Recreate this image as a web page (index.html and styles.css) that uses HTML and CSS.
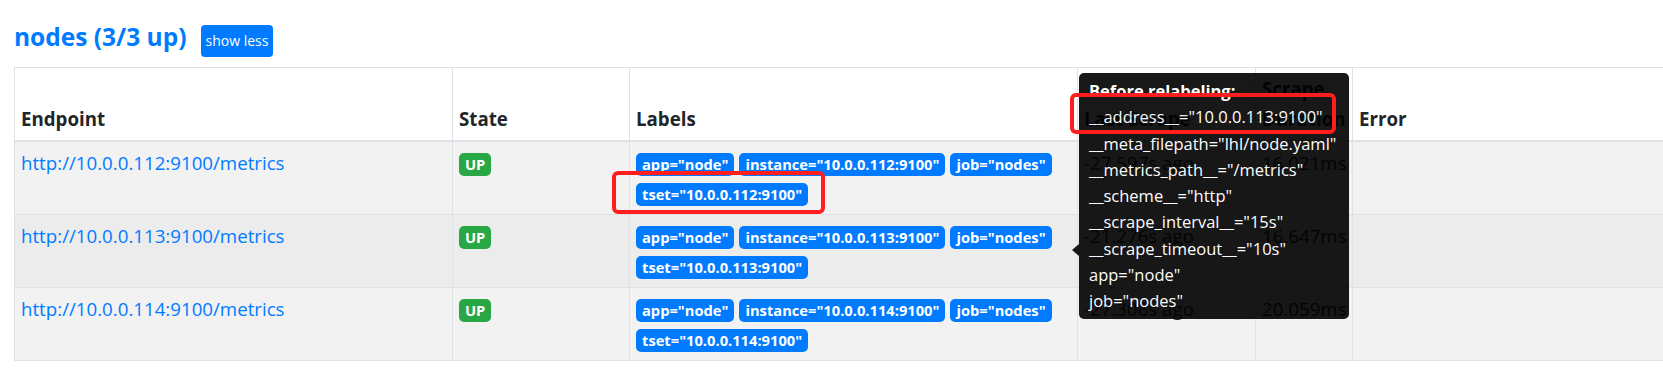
FILE: index.html
```html
<!DOCTYPE html>
<html lang="en">
<head>
  <meta charset="UTF-8">
  <meta name="viewport" content="width=device-width, initial-scale=1.0">
  <title>Targets</title>
  <link rel="stylesheet" href="styles.css">
</head>
<body>

  <div class="pool">
    <h3 class="pool-title">
      <a href="#pool-nodes" id="pool-nodes">nodes (3/3 up)</a>
      <button type="button" class="btn-xs">show less</button>
    </h3>

    <table class="targets">
      <colgroup>
        <col class="col-endpoint">
        <col class="col-state">
        <col class="col-labels">
        <col class="col-last">
        <col class="col-duration">
        <col class="col-error">
      </colgroup>
      <thead>
        <tr>
          <th>Endpoint</th>
          <th>State</th>
          <th>Labels</th>
          <th>Last Scrape</th>
          <th>Scrape Duration</th>
          <th>Error</th>
        </tr>
      </thead>
      <tbody>
        <tr class="odd">
          <td><a href="#">http://10.0.0.112:9100/metrics</a></td>
          <td><span class="badge badge-up">UP</span></td>
          <td>
            <span class="badge">app="node"</span><span class="badge">instance="10.0.0.112:9100"</span><span class="badge">job="nodes"</span><span class="badge">tset="10.0.0.112:9100"</span>
          </td>
          <td>-27.597s ago</td>
          <td>16.021ms</td>
          <td></td>
        </tr>
        <tr class="hover">
          <td><a href="#">http://10.0.0.113:9100/metrics</a></td>
          <td><span class="badge badge-up">UP</span></td>
          <td>
            <span class="badge">app="node"</span><span class="badge">instance="10.0.0.113:9100"</span><span class="badge">job="nodes"</span><span class="badge">tset="10.0.0.113:9100"</span>
          </td>
          <td>-21.276s ago</td>
          <td>16.647ms</td>
          <td></td>
        </tr>
        <tr class="odd">
          <td><a href="#">http://10.0.0.114:9100/metrics</a></td>
          <td><span class="badge badge-up">UP</span></td>
          <td>
            <span class="badge">app="node"</span><span class="badge">instance="10.0.0.114:9100"</span><span class="badge">job="nodes"</span><span class="badge">tset="10.0.0.114:9100"</span>
          </td>
          <td>-27.306s ago</td>
          <td>20.059ms</td>
          <td></td>
        </tr>
      </tbody>
    </table>
  </div>

  <!-- tooltip for the labels of the second target -->
  <div class="tooltip">
    <b>Before relabeling:</b><br>
    __address__="10.0.0.113:9100"<br>
    __meta_filepath="lhl/node.yaml"<br>
    __metrics_path__="/metrics"<br>
    __scheme__="http"<br>
    __scrape_interval__="15s"<br>
    __scrape_timeout__="10s"<br>
    app="node"<br>
    job="nodes"
  </div>

  <!-- red annotation boxes -->
  <div class="mark mark-address"></div>
  <div class="mark mark-tset"></div>

</body>
</html>
```

FILE: styles.css
```css
html, body {
  margin: 0;
  overflow: hidden;
}
body {
  font-family: "Open Sans", sans-serif;
  font-size: 18.7px;
  line-height: 30px;
  color: #212529;
  background-color: #fff;
}
a {
  color: #007bff;
  text-decoration: none;
}
.pool {
  padding: 22px 0 0 14px;
}
.pool-title {
  display: flex;
  align-items: baseline;
  gap: 14px;
  margin: 0 0 10px;
  font-size: 24.5px;
  line-height: 1.2;
  font-weight: 700;
}
.btn-xs {
  font-family: inherit;
  font-size: 14px;
  line-height: 21px;
  padding: 5.5px 5px;
  border: none;
  border-radius: 4px;
  background-color: #007bff;
  color: white;
}
.targets {
  border-collapse: collapse;
  table-layout: fixed;
  width: 1700px;
}
.col-endpoint { width: 438px; }
.col-state { width: 177px; }
.col-labels { width: 448px; }
.col-last { width: 178px; }
.col-duration { width: 97px; }
.targets th, .targets td {
  border: 1px solid #dee2e6;
  padding: 6px;
  text-align: left;
  vertical-align: top;
}
.targets th {
  vertical-align: bottom;
  border-bottom-width: 2px;
  font-weight: 700;
}
.targets tr.odd td {
  background-color: #f2f2f2;
}
.targets tr.hover td {
  background-color: #ececec;
}
.badge {
  display: inline-block;
  margin-right: 5px;
  padding: 4px 6px;
  font-size: 14.7px;
  line-height: 15px;
  font-weight: 700;
  color: white;
  background-color: #007bff;
  border-radius: 5px;
}
.badge-up {
  background-color: #28a745;
  margin-right: 0;
}
.tooltip {
  position: absolute;
  left: 1079px;
  top: 73px;
  width: 250px;
  padding: 5px 10px;
  font-size: 16.5px;
  line-height: 26.25px;
  color: white;
  background-color: #000;
  border-radius: 5px;
  opacity: 0.9;
}
.tooltip::before {
  content: "";
  position: absolute;
  left: -7px;
  top: 171px;
  border-style: solid;
  border-width: 6px 7px 6px 0;
  border-color: transparent #000 transparent transparent;
}
.mark {
  position: absolute;
  box-sizing: border-box;
  border: 4px solid #ff1e1e;
  border-radius: 6px;
}
.mark-address {
  left: 1070px;
  top: 93px;
  width: 266px;
  height: 41px;
}
.mark-tset {
  left: 612px;
  top: 171px;
  width: 213px;
  height: 43px;
}
```
